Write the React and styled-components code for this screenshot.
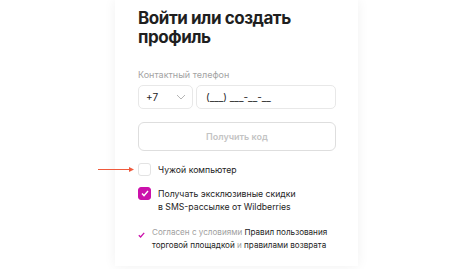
import React from "react";
import styled, { createGlobalStyle } from "styled-components";

const Global = createGlobalStyle`
  html, body {
    margin: 0;
    padding: 0;
    background: #ffffff;
  }
  body {
    font-family: Inter, "Liberation Sans", sans-serif;
    color: #242424;
    -webkit-font-smoothing: antialiased;
  }
`;

const Page = styled.div`
  width: 474px;
  height: 269px;
  overflow: hidden;
  position: relative;
  background: #ffffff;
`;

const Card = styled.div`
  position: relative;
  margin-left: 115px;
  width: 243px;
  height: 266px;
  box-sizing: border-box;
  padding: 9px 22px 0 23px;
  background: #ffffff;
  box-shadow: 0 0 12px rgba(0, 0, 0, 0.06);
`;

const Title = styled.h1`
  margin: 0;
  font-size: 17px;
  line-height: 19px;
  font-weight: 700;
  letter-spacing: -0.45px;
  color: #1f1f1f;
`;

const Label = styled.div`
  margin-top: 22px;
  font-size: 9px;
  line-height: 12px;
  color: #a3a3a3;
`;

const PhoneRow = styled.div`
  margin-top: 4px;
  display: flex;
  gap: 3px;
`;

const Field = styled.div`
  box-sizing: border-box;
  height: 24px;
  border: 1px solid #e8e8e8;
  border-radius: 5px;
  display: flex;
  align-items: center;
  font-size: 10px;
  color: #242424;
  flex: ${(p) => (p.$grow ? 1 : "none")};
  width: ${(p) => (p.$width ? p.$width + "px" : "auto")};
  padding: ${(p) => (p.$pad ? p.$pad : "0 8px")};
  justify-content: space-between;
`;

const Button = styled.button`
  display: block;
  box-sizing: border-box;
  margin-top: 13px;
  width: 100%;
  height: 29px;
  border: 1px solid #dedede;
  border-radius: 6px;
  background: #ffffff;
  font-family: inherit;
  font-size: 9px;
  font-weight: 600;
  color: #c4c4c4;
`;

const CheckRow = styled.label`
  display: flex;
  align-items: flex-start;
  gap: 7px;
  margin-top: ${(p) => p.$top}px;
  font-size: 8.7px;
  line-height: 13px;
  white-space: nowrap;
  color: #242424;
`;

const Box = styled.span`
  flex: none;
  box-sizing: border-box;
  width: 13px;
  height: 13px;
  border-radius: 3px;
  border: 1px solid ${(p) => (p.$checked ? "#cb11ab" : "#e3e3e3")};
  background: ${(p) => (p.$checked ? "#cb11ab" : "#ffffff")};
  display: flex;
  align-items: center;
  justify-content: center;
`;

const CheckText = styled.span`
  padding-top: 1px;
`;

const Agree = styled.div`
  margin-top: 12px;
  display: flex;
  gap: 7px;
  font-size: 8.1px;
  line-height: 13px;
  white-space: nowrap;
  color: #242424;
`;

const Muted = styled.span`
  color: #a0a0a0;
`;

const Tick = styled.span`
  flex: none;
  width: 7px;
  padding-top: 3px;
`;

const Arrow = styled.svg`
  position: absolute;
  left: 98px;
  top: 166px;
`;

const Chevron = () => (
  <svg width="10" height="6" viewBox="0 0 10 6">
    <path d="M1 1l4 4 4-4" fill="none" stroke="#b5b5b5" strokeWidth="1" />
  </svg>
);

export default function App() {
  return (
    <Page>
      <Global />
      <Card>
        <Title>
          Войти или создать
          <br />
          профиль
        </Title>
        <Label>Контактный телефон</Label>
        <PhoneRow>
          <Field $width={55} $pad="0 6px 0 7px">
            <span>+7</span>
            <Chevron />
          </Field>
          <Field $grow $pad="0 9px">
            <span>(___) ___-__-__</span>
          </Field>
        </PhoneRow>
        <Button>Получить код</Button>
        <CheckRow $top={12}>
          <Box />
          <CheckText>Чужой компьютер</CheckText>
        </CheckRow>
        <CheckRow $top={10}>
          <Box $checked>
            <svg width="8" height="7" viewBox="0 0 8 7">
              <path d="M1 3.6l2 2 4-4.6" fill="none" stroke="#fff" strokeWidth="1.4" />
            </svg>
          </Box>
          <CheckText>
            Получать эксклюзивные скидки
            <br />в SMS-рассылке от Wildberries
          </CheckText>
        </CheckRow>
        <Agree>
          <Tick>
            <svg width="7" height="6" viewBox="0 0 7 6">
              <path d="M0.8 3.2l1.8 1.8 3.6-4.2" fill="none" stroke="#cb11ab" strokeWidth="1.3" />
            </svg>
          </Tick>
          <span>
            <Muted>Согласен с условиями </Muted>Правил пользования
            <br />
            торговой площадкой <Muted>и</Muted> правилами возврата
          </span>
        </Agree>
      </Card>
      <Arrow width="38" height="7" viewBox="0 0 38 7">
        <line x1="0" y1="3.5" x2="33" y2="3.5" stroke="#ef5a3c" strokeWidth="1" />
        <path d="M31 1l5 2.5-5 2.5z" fill="#ef5a3c" />
      </Arrow>
    </Page>
  );
}
